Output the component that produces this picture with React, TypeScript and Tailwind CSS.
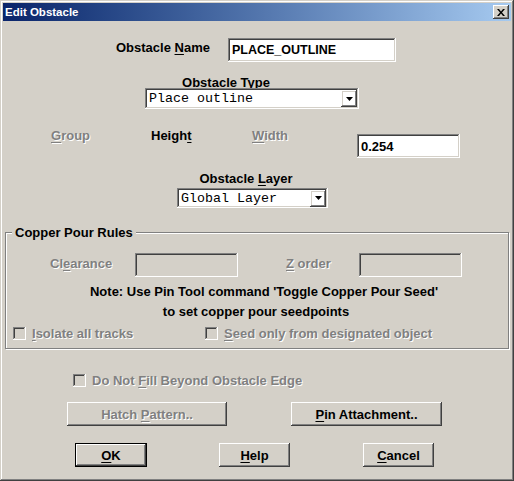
import React from "react";

const raised =
  "shadow-[inset_-1px_-1px_#404040,inset_1px_1px_#fff,inset_-2px_-2px_#808080,inset_2px_2px_#d4d0c8]";
const sunken =
  "shadow-[inset_-1px_-1px_#fff,inset_1px_1px_#808080,inset_-2px_-2px_#d4d0c8,inset_2px_2px_#404040]";
const dis = "text-[#808080] [text-shadow:1px_1px_0_#fff]";

function Check({ label, className }: { label: React.ReactNode; className?: string }) {
  return (
    <div className={"flex items-center h-[16px] " + (className ?? "")}>
      <div className={"w-[13px] h-[13px] shrink-0 " + sunken} />
      <span className={"ml-[6px] whitespace-nowrap " + dis}>{label}</span>
    </div>
  );
}

function Arrow() {
  return (
    <div className={"w-[16px] h-[17px] mr-[2px] flex items-center justify-center " + raised}>
      <svg width="7" height="4" viewBox="0 0 7 4">
        <path d="M0 0h7L3.5 4z" fill="#000" />
      </svg>
    </div>
  );
}

function Btn({
  children,
  className,
  disabled,
  def,
}: {
  children: React.ReactNode;
  className?: string;
  disabled?: boolean;
  def?: boolean;
}) {
  if (def) {
    return (
      <div className={"h-[24px] border border-black " + (className ?? "")}>
        <div className={"w-full h-full flex items-center justify-center " + raised}>
          <span className="whitespace-nowrap">{children}</span>
        </div>
      </div>
    );
  }
  return (
    <div
      className={
        "h-[24px] flex items-center justify-center " + raised + " " + (disabled ? dis : "") + " " + (className ?? "")
      }
    >
      <span className="whitespace-nowrap">{children}</span>
    </div>
  );
}

export default function App() {
  return (
    <div
      className={
        "w-[514px] h-[481px] bg-[#d4d0c8] flex flex-col font-['Liberation_Sans',Arial,sans-serif] text-[13px] font-bold leading-[15px] text-black select-none shadow-[inset_-1px_-1px_#404040,inset_1px_1px_#d4d0c8,inset_-2px_-2px_#808080,inset_2px_2px_#fff]"
      }
    >
      {/* Title bar */}
      <div className="mx-[3px] mt-[3px] h-[18px] flex items-center bg-linear-to-r from-[#0a246a] to-[#a6caf0]">
        <span className="pl-[2px] text-white text-[11.5px] font-bold">Edit Obstacle</span>
        <div className={"ml-auto mr-[2px] w-[16px] h-[14px] bg-[#d4d0c8] flex items-center justify-center " + raised}>
          <svg width="8" height="7" viewBox="0 0 8 7">
            <path d="M0 0h2l2 2.5L6 0h2L5 3.5L8 7H6L4 4.5L2 7H0l3-3.5z" fill="#000" />
          </svg>
        </div>
      </div>

      {/* Obstacle Name */}
      <div className="mt-[17px] h-[24px] flex">
        <div className="w-[228px] pl-[116px] pt-[2px] whitespace-nowrap">
          Obstacle <u className="underline-offset-2">N</u>ame
        </div>
        <div className={"w-[168px] h-[24px] bg-white flex items-center pl-[4px] text-[12.5px] " + sunken}>
          PLACE_OUTLINE
        </div>
      </div>

      {/* Obstacle Type */}
      <div className="mt-[13px] h-[13px] ml-[166px] w-[120px] text-center whitespace-nowrap">
        O<u className="underline-offset-2">b</u>stacle Type
      </div>
      <div className={"ml-[145px] w-[214px] h-[21px] bg-white flex items-center " + sunken}>
        <span className="flex-1 pl-[4px] font-['Liberation_Mono','Courier_New',monospace] font-normal text-[13.33px]">
          Place outline
        </span>
        <Arrow />
      </div>

      {/* Group / Height / Width */}
      <div className="mt-[19px] h-[30px] flex">
        <div className={"w-[151px] pl-[51px] " + dis}>
          <u className="underline-offset-2">G</u>roup
        </div>
        <div className="w-[101px]">
          Heigh<u className="underline-offset-2">t</u>
        </div>
        <div className={"w-[105px] " + dis}>
          <u className="underline-offset-2">W</u>idth
        </div>
        <div className={"mt-[6px] w-[103px] h-[24px] bg-white flex items-center pl-[4px] " + sunken}>0.254</div>
      </div>

      {/* Obstacle Layer */}
      <div className="mt-[13px] h-[17px] ml-[186px] w-[120px] text-center whitespace-nowrap">
        Obstacle <u className="underline-offset-2">L</u>ayer
      </div>
      <div className={"ml-[177px] w-[151px] h-[20px] bg-white flex items-center " + sunken}>
        <span className="flex-1 pl-[4px] font-['Liberation_Mono','Courier_New',monospace] font-normal text-[13.33px]">
          Global Layer
        </span>
        <Arrow />
      </div>

      {/* Copper Pour Rules */}
      <div className="mt-[24px] mx-[5px] h-[117px] relative border border-[#808080] shadow-[inset_1px_1px_#fff,1px_1px_#fff]">
        <div className="absolute -top-[8px] left-[6px] px-[3px] bg-[#d4d0c8] whitespace-nowrap">Copper Pour Rules</div>
        <div className="pt-[20px]">
          <div className="h-[24px] flex">
            <div className={"w-[129px] pl-[44px] pt-[3px] " + dis}>
              Cl<u className="underline-offset-2">e</u>arance
            </div>
            <div className={"w-[103px] h-[24px] " + sunken} />
            <div className={"w-[121px] pl-[48px] pt-[3px] whitespace-nowrap " + dis}>
              <u className="underline-offset-2">Z</u> order
            </div>
            <div className={"w-[103px] h-[24px] " + sunken} />
          </div>
          <div className="mt-[5px] leading-[20px] text-center">
            <div className="pl-[14px]">Note: Use Pin Tool command 'Toggle Copper Pour Seed'</div>
            <div className="pr-[2px]">to set copper pour seedpoints</div>
          </div>
          <div className="mt-[3px] flex pl-[7px]">
            <Check
              className="w-[192px]"
              label={
                <>
                  <u className="underline-offset-2">I</u>solate all tracks
                </>
              }
            />
            <Check
              label={
                <>
                  <u className="underline-offset-2">S</u>eed only from designated object
                </>
              }
            />
          </div>
        </div>
      </div>

      {/* Do not fill */}
      <Check
        className="mt-[23px] ml-[73px]"
        label={
          <>
            Do Not <u className="underline-offset-2">F</u>ill Beyond Obstacle Edge
          </>
        }
      />

      {/* Buttons row 1 */}
      <div className="mt-[14px] flex">
        <Btn disabled className="ml-[67px] w-[160px]">
          Hatch <u className="underline-offset-2">P</u>attern..
        </Btn>
        <Btn className="ml-[64px] w-[151px]">
          <u className="underline-offset-2">P</u>in Attachment..
        </Btn>
      </div>

      {/* Buttons row 2 */}
      <div className="mt-[17px] flex">
        <Btn def className="ml-[75px] w-[72px]">
          <u className="underline-offset-2">O</u>K
        </Btn>
        <Btn className="ml-[72px] w-[71px]">
          <u className="underline-offset-2">H</u>elp
        </Btn>
        <Btn className="ml-[73px] w-[71px]">
          <u className="underline-offset-2">C</u>ancel
        </Btn>
      </div>
    </div>
  );
}
